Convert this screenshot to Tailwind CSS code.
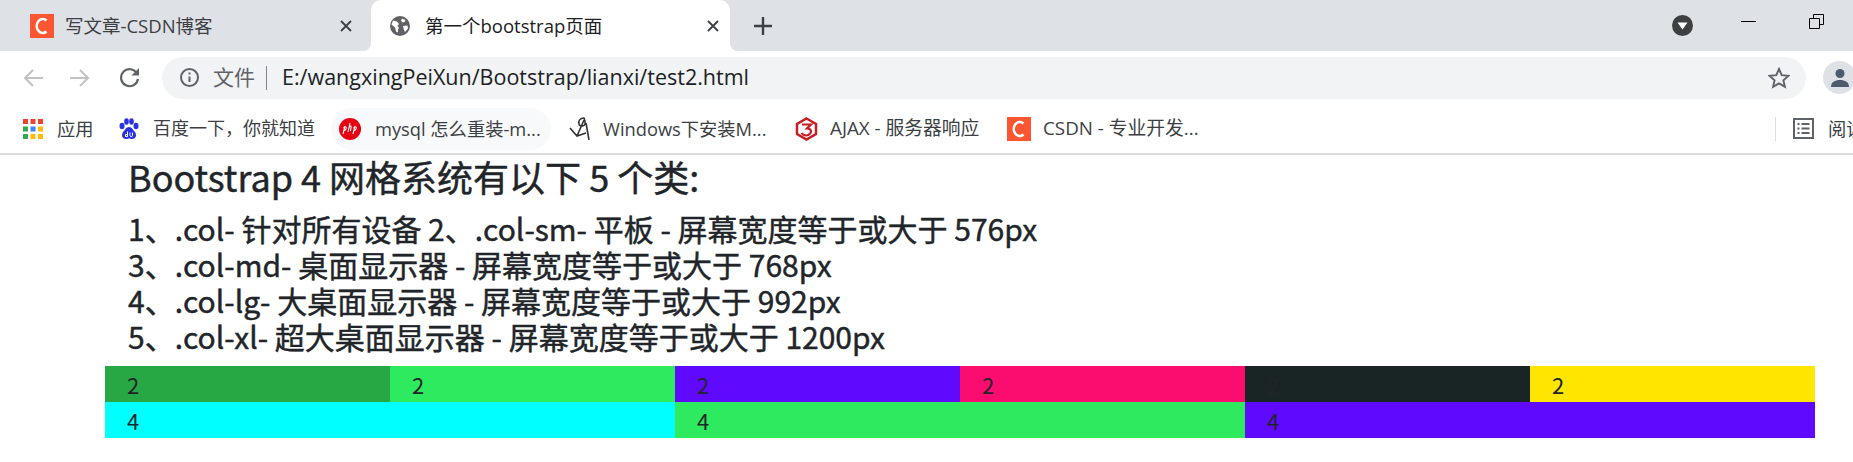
<!DOCTYPE html>
<html lang="zh-CN">
  <head>
    <meta charset="UTF-8" />
    <script src="https://cdn.jsdelivr.net/npm/@tailwindcss/browser@4"></script>
    <title>第一个bootstrap页面</title>
  </head>
  <body class="h-[462px] w-[1853px] overflow-hidden bg-white font-['Open_Sans','Noto_Sans_CJK_SC',sans-serif]">
    <!-- tab strip -->
    <div class="flex h-[51px] items-center bg-[#dee1e6] text-[#3c4043]">
      <div class="flex h-full w-[371px] items-center pl-[30px]">
        <svg class="w-6 h-6 shrink-0" viewBox="0 0 24 24"><rect width="24" height="24" fill="#fc5531"/><path d="M16.500 6.500A6 7 0 1 0 16.500 17.500" fill="none" stroke="#fff" stroke-width="2.600"/></svg>
        <span class="ml-[11px] w-[275px] whitespace-nowrap text-[18.5px]">写文章-CSDN博客</span>
        <svg class="w-3 h-3" viewBox="0 0 12 12"><path d="M1 1l10 10M11 1L1 11" stroke="#3c4043" stroke-width="1.800"/></svg>
      </div>
      <div class="relative flex h-full w-[359px] items-center rounded-t-[10px] bg-white pl-[19px]">
        <svg class="absolute bottom-0 left-[-8px] w-2 h-2" viewBox="0 0 8 8"><path d="M8 0V8H0A8 8 0 0 0 8 0Z" fill="#fff"/></svg>
        <svg class="absolute bottom-0 right-[-8px] w-2 h-2" viewBox="0 0 8 8"><path d="M0 0V8H8A8 8 0 0 1 0 0Z" fill="#fff"/></svg>
        <svg class="w-[20px] h-[20px] shrink-0" viewBox="0 0 20 20"><circle cx="10" cy="10" r="10" fill="#5f6368"/><path d="M3 4.500l4 1 2 2.500-1.500 2 1.500 2-1 1.500v3l-2-1-1-4-3.500-3zM12 2.500l3.500 1.500-1 2-2 .5-1.500-2zM13 10l4.500-.5.500 3-3 3.500-1-2z" fill="#fff"/></svg>
        <span class="ml-[15px] w-[282px] whitespace-nowrap text-[18.5px] text-[#202124]">第一个bootstrap页面</span>
        <svg class="w-3 h-3" viewBox="0 0 12 12"><path d="M1 1l10 10M11 1L1 11" stroke="#3c4043" stroke-width="1.800"/></svg>
      </div>
      <svg class="ml-[24px] w-[18px] h-[18px]" viewBox="0 0 18 18"><path d="M9 0v18M0 9h18" stroke="#3c4043" stroke-width="2.400"/></svg>
      <svg class="ml-[900px] w-[21px] h-[21px]" viewBox="0 0 21 21"><circle cx="10.500" cy="10.500" r="10.500" fill="#3c4043"/><path d="M5.500 7.500h10l-5 7z" fill="#fff"/></svg>
      <div class="ml-[48px] mb-[9px] h-px w-[15px] bg-black"></div>
      <svg class="ml-[53px] mb-[8px] w-[15px] h-[15px]" viewBox="0 0 15 15"><path d="M.5 4.500h10v10H.5zM4.500 4.500V.5h10v10h-4" fill="none" stroke="#000"/></svg>
    </div>

    <!-- toolbar -->
    <div class="flex h-[53px] items-center">
      <svg class="ml-[23px] w-[20px] h-[20px] shrink-0" viewBox="0 0 20 20"><path d="M20 10H2M10 2l-8 8 8 8" fill="none" stroke="#c0c2c5" stroke-width="2"/></svg>
      <svg class="ml-[27px] w-[20px] h-[20px] shrink-0" viewBox="0 0 20 20"><path d="M0 10h18M10 2l8 8-8 8" fill="none" stroke="#c0c2c5" stroke-width="2"/></svg>
      <svg class="ml-[29px] w-[21px] h-[21px] shrink-0" viewBox="0 0 21 21"><path d="M18 6.500A8.500 8.500 0 1 0 19 12" fill="none" stroke="#5f6368" stroke-width="2.200"/><path d="M20 1v7.500h-7.500z" fill="#5f6368"/></svg>
      <div class="ml-[22px] flex h-[42px] w-[1644px] shrink-0 items-center rounded-full bg-[#f1f3f4]">
        <svg class="ml-[18px] w-[19px] h-[19px]" viewBox="0 0 19 19"><circle cx="9.500" cy="9.500" r="8.500" fill="none" stroke="#5f6368" stroke-width="2"/><path d="M9.500 8.500v5.500M9.500 4.500v2" stroke="#5f6368" stroke-width="2"/></svg>
        <span class="ml-[14px] whitespace-nowrap text-[21px] text-[#5f6368]">文件</span>
        <div class="ml-[11px] h-6 w-px bg-[#80868b]"></div>
        <span class="ml-[15px] whitespace-nowrap text-[21.5px] text-[#202124]">E:/wangxingPeiXun/Bootstrap/lianxi/test2.html</span>
        <svg class="ml-auto mr-[16px] w-[22px] h-[22px]" viewBox="0 0 22 22"><path d="M11 2l2.700 6.200 6.800.6-5.100 4.500 1.500 6.600L11 16.400l-5.900 3.500 1.500-6.600L1.500 8.800l6.800-.6z" fill="none" stroke="#5f6368" stroke-width="1.900"/></svg>
      </div>
      <div class="ml-[17px] flex h-[33px] w-[33px] shrink-0 items-center justify-center overflow-hidden rounded-full bg-[#dee1e6]">
        <svg class="w-[20px] h-[20px]" viewBox="0 0 20 20"><circle cx="10" cy="5.500" r="4.500" fill="#4d5a70"/><path d="M1 19c0-5 4-7 9-7s9 2 9 7z" fill="#4d5a70"/></svg>
      </div>
    </div>

    <!-- bookmarks bar -->
    <div class="box-content flex h-[49px] items-center overflow-hidden whitespace-nowrap border-b-2 border-[#dadce0] text-[18.3px] text-[#3c4043]">
      <svg class="ml-[23px] w-[20px] h-[20px] shrink-0" viewBox="0 0 20 20">
        <rect width="5" height="5" fill="#ea4335"/><rect x="7.500" width="5" height="5" fill="#ea4335"/><rect x="15" width="5" height="5" fill="#ea4335"/>
        <rect y="7.500" width="5" height="5" fill="#34a853"/><rect x="7.500" y="7.500" width="5" height="5" fill="#4285f4"/><rect x="15" y="7.500" width="5" height="5" fill="#fbbc05"/>
        <rect y="15" width="5" height="5" fill="#34a853"/><rect x="7.500" y="15" width="5" height="5" fill="#fbbc05"/><rect x="15" y="15" width="5" height="5" fill="#fbbc05"/>
      </svg>
      <span class="ml-[14px] w-[35px] shrink-0">应用</span>
      <svg class="ml-[27px] w-[20px] h-[22px] shrink-0" viewBox="0 0 20 22"><g fill="#2932e1"><ellipse cx="3" cy="8" rx="2.500" ry="3.200"/><ellipse cx="7.500" cy="3.500" rx="2.300" ry="3.200"/><ellipse cx="12.500" cy="3.500" rx="2.300" ry="3.200"/><ellipse cx="17" cy="8" rx="2.500" ry="3.200"/><path d="M10 9c-3 0-4 3-6 5-2 3-1 7 3 7 1.500 0 2-.5 3-.5s1.500.5 3 .5c4 0 5-4 3-7-2-2-3-5-6-5z"/></g><path d="M6.500 16.500h2.500M8.500 13.500v5H6.500v-2M11 14.500v3c0 1.500 2.500 1.500 2.500 0v-3" fill="none" stroke="#fff" stroke-width="1"/></svg>
      <span class="ml-[14px] w-[162px] shrink-0 text-[18px]">百度一下，你就知道</span>
      <div class="ml-[16px] flex h-[42px] w-[220px] shrink-0 items-center rounded-full bg-[#f8f9fa] pl-[8px]">
        <svg class="w-[22px] h-[22px] shrink-0" viewBox="0 0 22 22"><circle cx="11" cy="11" r="11" fill="#e60012"/><path d="M4 16l2-8M4.500 10c2-2 3.500-1 2.500 1s-2 1.500-2.500 1M9 14l2-9M10 9c1.500-1.500 2.500-1 2 .5L11.500 13M14 16l2-8M14.500 10c2-2 3.500-1 2.500 1s-2 1.500-2.500 1" fill="none" stroke="#fff" stroke-width="1.100"/></svg>
        <span class="ml-[14px]">mysql 怎么重装-m...</span>
      </div>
      <svg class="ml-[18px] w-[22px] h-[24px] shrink-0" viewBox="0 0 22 24"><path d="M1 11l7 8 9-3M8 19l7-16M15 1c-4 0-6 3-5 6s5 3 6 0c.5-2 0-4-1-6zM17 6l3 17" fill="none" stroke="#333" stroke-width="1.600"/></svg>
      <span class="ml-[12px] w-[166px] shrink-0">Windows下安装M...</span>
      <svg class="ml-[26px] w-[23px] h-[24px] shrink-0" viewBox="0 0 23 24"><path d="M11.500 1.500l9.500 5.500v10l-9.500 5.500L2 17V7z" fill="none" stroke="#c71d23" stroke-width="2.500"/><path d="M7 7.500h9l-4 4c3 0 4 1.500 4 3s-2 4-4.500 4-4-1-5-2.500" fill="none" stroke="#c71d23" stroke-width="2.200"/></svg>
      <span class="ml-[12px] w-[152px] shrink-0 text-[18.8px]">AJAX - 服务器响应</span>
      <svg class="ml-[25px] w-6 h-6 shrink-0" viewBox="0 0 24 24"><rect width="24" height="24" fill="#fc5531"/><path d="M16.500 6.500A6 7 0 1 0 16.500 17.500" fill="none" stroke="#fff" stroke-width="2.600"/></svg>
      <span class="ml-[12px] w-[154px] shrink-0 text-[18.8px]">CSDN - 专业开发...</span>
      <div class="ml-[578px] h-6 w-px shrink-0 bg-[#dadce0]"></div>
      <svg class="ml-[17px] w-[21px] h-[21px] shrink-0" viewBox="0 0 21 21"><rect x="1" y="1" width="19" height="19" fill="none" stroke="#5f6368" stroke-width="2"/><path d="M4.500 6h2M4.500 10.500h2M4.500 15h2M8.500 6h8M8.500 10.500h8M8.500 15h8" stroke="#5f6368" stroke-width="2"/></svg>
      <span class="ml-[14px] shrink-0">阅读清单</span>
    </div>

    <!-- page content -->
    <div class="ml-[105px] w-[1710px] font-['Noto_Sans_CJK_SC',sans-serif] text-[#212529]">
      <div class="pl-[23px] [-webkit-text-stroke:0.45px]">
        <h3 class="h-[55px] text-[36px] leading-[42px] font-normal">Bootstrap 4 网格系统有以下 5 个类:</h3>
        <p class="text-[30px] leading-[36px]">1、.col- 针对所有设备 2、.col-sm- 平板 - 屏幕宽度等于或大于 576px</p>
        <p class="text-[30px] leading-[36px]">3、.col-md- 桌面显示器 - 屏幕宽度等于或大于 768px</p>
        <p class="text-[30px] leading-[36px]">4、.col-lg- 大桌面显示器 - 屏幕宽度等于或大于 992px</p>
        <p class="text-[30px] leading-[36px]">5、.col-xl- 超大桌面显示器 - 屏幕宽度等于或大于 1200px</p>
      </div>
      <div class="mt-[12px] grid grid-cols-6 text-[22px] leading-[36px]">
        <div class="h-9 bg-[#28a745] px-[22px]">2</div>
        <div class="h-9 bg-[#2eea5f] px-[22px]">2</div>
        <div class="h-9 bg-[#5f09ff] px-[22px]">2</div>
        <div class="h-9 bg-[#fb0d6f] px-[22px]">2</div>
        <div class="h-9 bg-[#192424] px-[22px]">2</div>
        <div class="h-9 bg-[#ffe600] px-[22px]">2</div>
        <div class="col-span-2 h-9 bg-[#00ffff] px-[22px]">4</div>
        <div class="col-span-2 h-9 bg-[#2eea5f] px-[22px]">4</div>
        <div class="col-span-2 h-9 bg-[#5f09ff] px-[22px]">4</div>
      </div>
    </div>
  </body>
</html>
